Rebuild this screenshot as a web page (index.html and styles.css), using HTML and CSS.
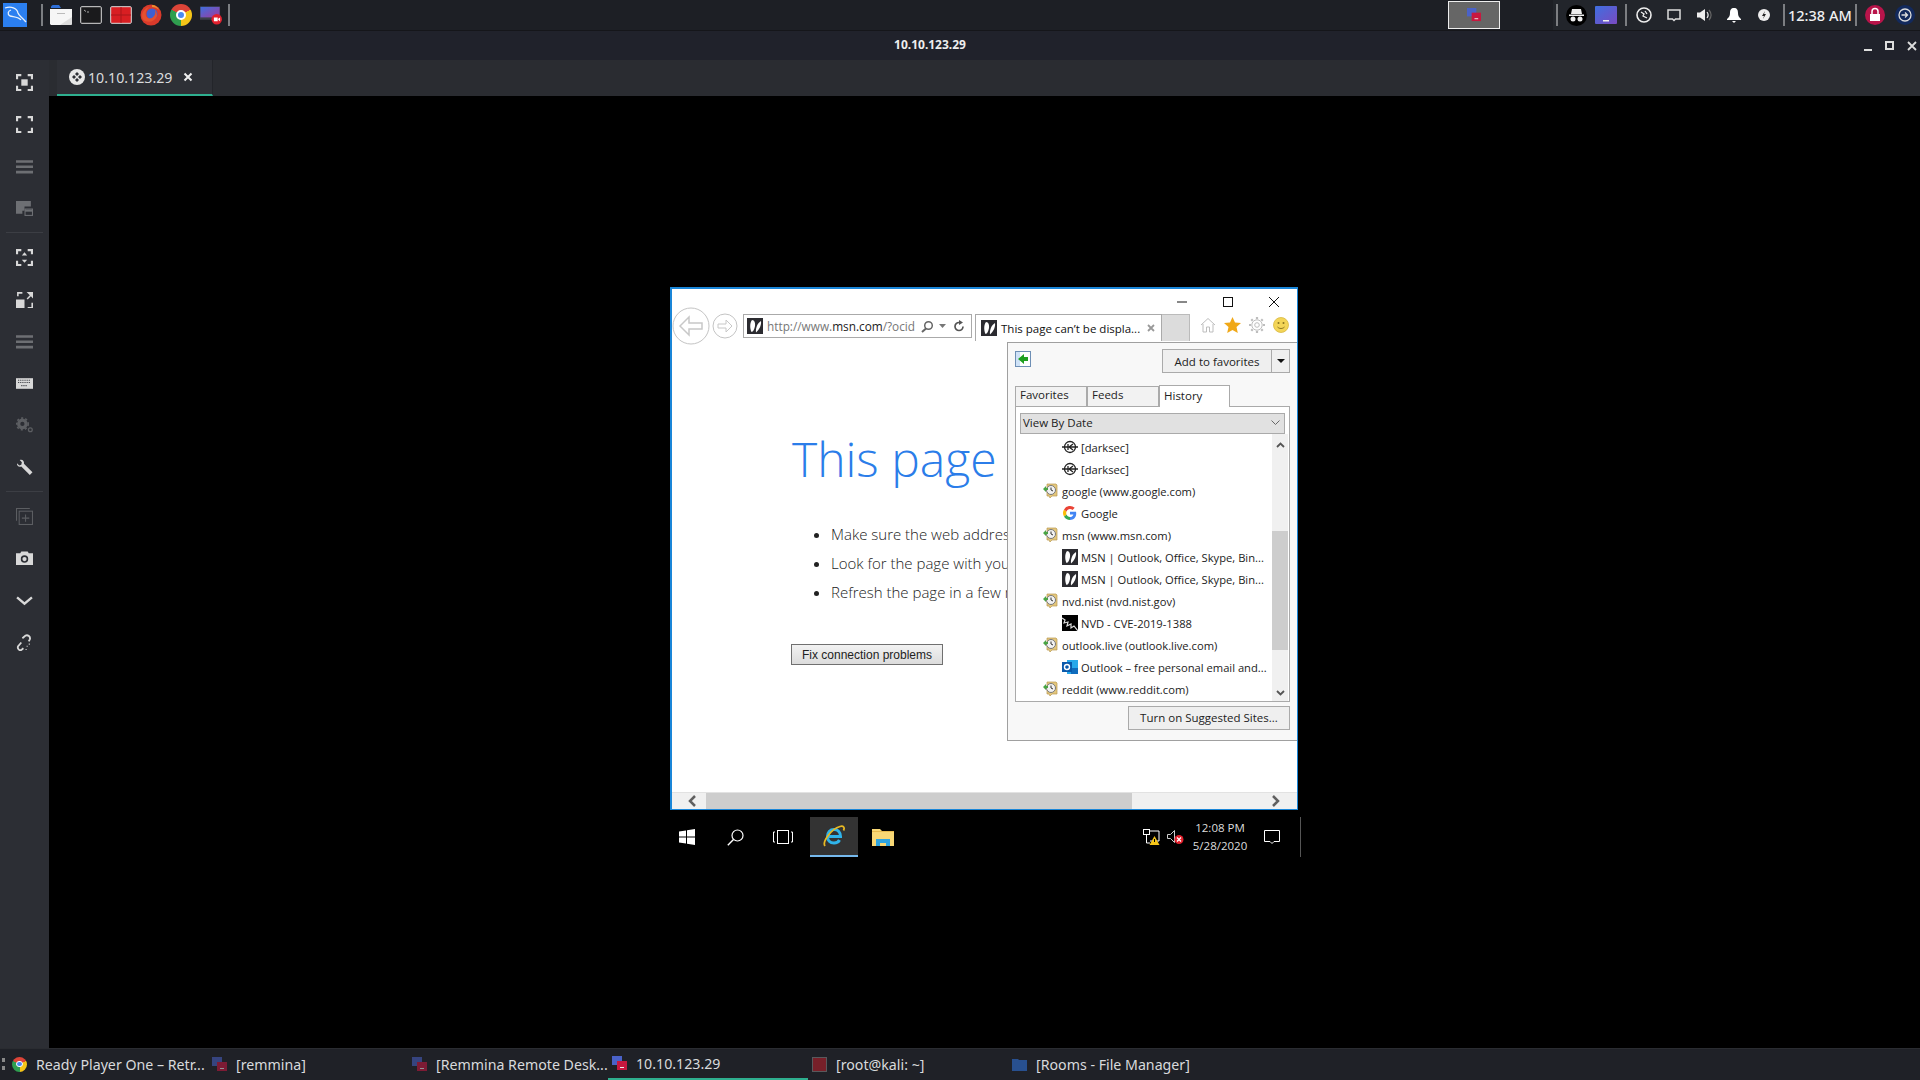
FILE: index.html
```html
<!DOCTYPE html>
<html lang="en">
<head>
    <meta charset="UTF-8">
    <title>10.10.123.29</title>
    <link rel="stylesheet" href="styles.css">
</head>
<body>
<svg class="defs" width="0" height="0">
    <symbol id="msn" viewBox="0 0 16 16"><rect width="16" height="16" fill="#2b2b30"/><path d="M5 2c2.500 0 3.500 3 3 6-.5 3-2 6-3.500 6C3 11 2.500 5 5 2zM14 3c.6 4-1.500 8.500-5 11.500C8.500 10 10.500 5 14 3z" fill="#fff"/></symbol>
    <symbol id="hist" viewBox="0 0 16 16"><path d="M4 1h9l1 1v11H9l-2 2-1-2H4z" fill="#e4c77c" stroke="#b99a50" stroke-width=".7"/><circle cx="8" cy="7" r="4.500" fill="#f2f2f2" stroke="#777"/><path d="M8 4.500V7l2 1" fill="none" stroke="#333"/><path d="M0 6l3-3v2h2v2H3v2z" fill="#4aa544"/></symbol>
    <symbol id="darksec" viewBox="0 0 16 16"><circle cx="8" cy="8" r="5.500" fill="#fff" stroke="#222" stroke-width="1.300"/><path d="M0 8h16M6 5v6M11 5L7 8l4 3" fill="none" stroke="#222" stroke-width="1.300"/></symbol>
    <symbol id="corners" viewBox="0 0 16 16"><path d="M1 5V1h4M11 1h4v4M15 11v4h-4M5 15H1v-4" fill="none" stroke="currentColor" stroke-width="2"/></symbol>
    <symbol id="bars" viewBox="0 0 16 16"><path d="M0 2h16v2.500H0zM0 7h16v2.500H0zM0 12h16v2.500H0z" fill="currentColor"/></symbol>
    <symbol id="rem" viewBox="0 0 15 15"><rect width="10" height="9" fill="#4a62c8"/><rect x="5" y="5" width="10" height="9" fill="#c8173f"/><rect x="8" y="11" width="4" height="1" fill="#eee"/></symbol>
</svg>

<div class="desktop">
    <div class="top-panel">
        <div class="launchers">
            <svg class="kali" viewBox="0 0 24 24"><rect width="24" height="24" fill="#2b7ff0"/><path d="M2 5c6-2 12 0 13 5 1 3 4 4 8 9M8 7c-3 1-4 4-1 6 4 1 9 1 11 4" fill="none" stroke="#e8f1fb" stroke-width="1.300"/></svg>
            <i class="sep"></i>
            <svg class="launch first" viewBox="0 0 22 22"><path d="M1 3c0-1 1-2 2-2h6l2 3H1z" fill="#2e6fd8"/><path d="M0 5h22v15l-1 1H1l-1-1z" fill="#f6f6f6"/><path d="M7 9h8v1H7z" fill="#bbb"/><path d="M22 13v7l-1 1H10z" fill="#ddd"/></svg>
            <svg class="launch" viewBox="0 0 22 22"><rect x=".7" y="2.700" width="20.600" height="16.600" rx="1" fill="#1a1a1c" stroke="#ddd" stroke-width="1"/><path d="M4 6l2 1.500M7 8h2" stroke="#aaa"/></svg>
            <svg class="launch" viewBox="0 0 22 22"><rect x=".7" y="2.700" width="20.600" height="16.600" rx="1" fill="#d81e22" stroke="#ddd" stroke-width="1"/><path d="M11 3v16M1 11h20" stroke="#a8161a"/></svg>
            <svg class="launch" viewBox="0 0 22 22"><circle cx="11" cy="11" r="10.500" fill="#d93a2b"/><circle cx="12" cy="10" r="5.500" fill="#3f5fd0"/><path d="M5 17c5 2 10 0 12-5 0-3-1-5-2-6 1 3 0 6-3 8-3 1-5 0-6-2-1-3 0-6 3-9-4 1-7 5-7 9 0 2 1 4 3 5z" fill="#e5502f"/><path d="M12 1c3 0 6 2 7 5-2-2-4-3-7-3z" fill="#e8912d"/></svg>
            <div class="launch chrome"><span></span></div>
            <svg class="launch" viewBox="0 0 23 22"><rect y="2" width="21" height="14" fill="#3c3f4a"/><rect x=".5" y="2.500" width="20" height="11" fill="url(#mon)"/><defs><linearGradient id="mon" x1="0" y1="0" x2="1" y2="1"><stop offset="0" stop-color="#3f6fe0"/><stop offset="1" stop-color="#a03a9c"/></linearGradient></defs><circle cx="17.500" cy="15.500" r="5.500" fill="#e0202e"/><path d="M14.500 13.500h4v4h-4zM19 15l2-1.500v4L19 16z" fill="#fff"/></svg>
            <i class="sep after"></i>
        </div>
        <div class="panel-right">
            <div class="thumb">
                <svg width="16" height="14" viewBox="0 0 15 15"><use href="#rem"/></svg>
            </div>
            <div class="tray">
                <i class="sep"></i>
                <svg class="ic-incog" viewBox="0 0 21 21"><circle cx="10.500" cy="10.500" r="10.500" fill="#000"/><path d="M6 4h9l1 5H5zM3 9.500h15V11H3z" fill="#eee"/><circle cx="7" cy="14" r="2.500" fill="#eee"/><circle cx="14" cy="14" r="2.500" fill="#eee"/></svg>
                <svg class="ic-box" viewBox="0 0 22 18"><defs><linearGradient id="box" x1="0" y1="0" x2="1" y2="1"><stop offset="0" stop-color="#3f6fe0"/><stop offset="1" stop-color="#7a4ac0"/></linearGradient></defs><rect width="22" height="18" rx="1" fill="url(#box)"/><path d="M8 14h6v1.500H8z" fill="#eee"/></svg>
                <i class="sep"></i>
                <div class="tray-icons">
                    <svg width="16" height="16" viewBox="0 0 16 16"><circle cx="8" cy="8" r="7" fill="none" stroke="#eee" stroke-width="1.600"/><path d="M5 5l3 2-1 2 4 2M9 4l2 3" fill="none" stroke="#eee" stroke-width="1.300"/></svg>
                    <svg width="14" height="14" viewBox="0 0 14 14"><path d="M1 2h12v9H8.500L7 12.500 5.500 11H1z" fill="none" stroke="#ddd" stroke-width="1.500"/></svg>
                    <svg width="16" height="16" viewBox="0 0 16 16"><path d="M1 5.500h3L9 2v12l-5-3.500H1z" fill="#eee"/><path d="M11 5c1.500 2 1.500 4 0 6" fill="none" stroke="#eee" stroke-width="1.200"/><path d="M13 3c2.500 3 2.500 7 0 10" fill="none" stroke="#666" stroke-width="1.200"/></svg>
                    <svg width="14" height="16" viewBox="0 0 14 16"><path d="M7 1c3 0 4 2 4 5 0 3 1 4 3 6v1H0v-1c2-2 3-3 3-6 0-3 1-5 4-5zM5 14h4l-2 2z" fill="#fff"/></svg>
                    <svg class="ic-dot" width="12" height="12" viewBox="0 0 12 12"><circle cx="6" cy="6" r="6" fill="#eee"/><path d="M7 2L4 7h2l-1 3 3-5H6z" fill="#222"/></svg>
                </div>
                <i class="sep clock-sep"></i>
                <span class="clock">12:38 AM</span>
                <i class="sep"></i>
                <svg class="ic-round" viewBox="0 0 20 20"><circle cx="10" cy="10" r="10" fill="#b8144a"/><rect x="5" y="9" width="10" height="7" fill="#fff"/><path d="M7 9V6.500a3 3 0 0 1 6 0V9" fill="none" stroke="#fff" stroke-width="1.500"/></svg>
                <svg class="ic-round last" viewBox="0 0 20 20"><circle cx="10" cy="10" r="10" fill="#12295c"/><circle cx="10" cy="10" r="6" fill="none" stroke="#ddd" stroke-width="1.300"/><path d="M6.500 10h6M10 7.500l2.500 2.500-2.500 2.500" fill="none" stroke="#ddd" stroke-width="1.300"/></svg>
            </div>
        </div>
    </div>

    <div class="title-bar">
        <span class="title">10.10.123.29</span>
        <div class="title-btns">
            <svg width="10" height="10" viewBox="0 0 10 10"><path d="M1 8h8v2H1z" fill="#ddd"/></svg>
            <svg width="10" height="10" viewBox="0 0 10 10"><rect x="1" y="1" width="7" height="7" fill="none" stroke="#ddd" stroke-width="2"/></svg>
            <svg width="10" height="10" viewBox="0 0 10 10"><path d="M1 1l8 8M9 1L1 9" stroke="#ddd" stroke-width="1.800"/></svg>
        </div>
    </div>

    <div class="main">
        <div class="side">
            <div class="side-btn"><svg viewBox="0 0 16 16"><use href="#corners"/><rect x="5" y="5" width="6" height="6" fill="currentColor"/></svg></div>
            <div class="side-btn"><svg viewBox="0 0 16 16"><use href="#corners"/></svg></div>
            <div class="side-btn dim"><svg viewBox="0 0 16 16"><use href="#bars"/></svg></div>
            <div class="side-btn dim"><svg viewBox="0 0 16 16"><path d="M0 1h14v5H8v4H6v3H0z" fill="currentColor"/><rect x="8.500" y="8.500" width="7" height="6" fill="none" stroke="currentColor"/><path d="M8.500 9h7v2h-7z" fill="currentColor"/></svg></div>
            <div class="side-rule"></div>
            <div class="side-btn"><svg viewBox="0 0 16 16"><use href="#corners"/><path d="M8 3l2.500 3h-5zM8 13l-2.500-3h5z" fill="currentColor"/></svg></div>
            <div class="side-btn"><svg viewBox="0 0 16 16"><path d="M0 8h8v8H0zM1 5V1h5v1.500H2.500V5zM11 15h3.500v-4H16v5h-5zM10 1h6v6l-2-2-3 3-1-1 3-3z" fill="currentColor"/></svg></div>
            <div class="side-btn dim"><svg viewBox="0 0 16 16"><use href="#bars"/></svg></div>
            <div class="side-btn"><svg viewBox="0 0 16 16"><path d="M0 3h16v10H0z" fill="currentColor"/><path d="M2 5h12M2 7h12M5 10h6" stroke="#2d2f35" stroke-dasharray="1 1"/></svg></div>
            <div class="side-btn dimmer"><svg viewBox="0 0 16 16"><circle cx="6" cy="6.500" r="3.500" fill="none" stroke="currentColor" stroke-width="3"/><circle cx="6" cy="6.500" r="5.500" fill="none" stroke="currentColor" stroke-width="1.500" stroke-dasharray="2 2"/><circle cx="13.500" cy="12" r="1.800" fill="none" stroke="currentColor" stroke-width="1.200"/></svg></div>
            <div class="side-btn"><svg viewBox="0 0 16 16"><path d="M1 4l2 2 2-.5L5.500 3 3.500 1C6 0 8 2 7.500 4.500L15.500 12.500 13 15 5 7C3 8 .5 6.500 1 4z" fill="currentColor"/></svg></div>
            <div class="side-rule"></div>
            <div class="side-btn dimmer"><svg viewBox="0 0 16 16"><path d="M.5 12V.5H13" fill="none" stroke="currentColor"/><rect x="3" y="3" width="12.500" height="12.500" fill="none" stroke="currentColor"/><path d="M9 6v7M5.500 9.500h7" stroke="currentColor"/></svg></div>
            <div class="side-btn"><svg viewBox="0 0 16 16"><path fill-rule="evenodd" d="M0 3h4l1-1.500h6L12 3h4v11H0zM8 5a3.500 3.500 0 1 0 0 7 3.500 3.500 0 0 0 0-7z" fill="currentColor"/><circle cx="8" cy="8.500" r="2" fill="currentColor"/></svg></div>
            <div class="side-btn"><svg viewBox="0 0 16 16"><path d="M1 5l7 6 7-6" fill="none" stroke="currentColor" stroke-width="2.200"/></svg></div>
            <div class="side-btn"><svg viewBox="0 0 16 16"><path d="M7 13.500l-2 1.500c-2 1-4-1.500-3-3.500L5 8M6 4l3-2.500c2-1 5 1 4 3.500l-1 2" fill="none" stroke="currentColor" stroke-width="1.700"/><path d="M10 11h1v1h-1zM12 9h1v1h-1zM9 14h1v1H9z" fill="currentColor"/></svg></div>
        </div>
        <div class="content">
            <div class="tab-strip">
                <div class="tab">
                    <svg width="16" height="16" viewBox="0 0 16 16"><circle cx="8" cy="8" r="8" fill="#e8e8e8"/><path d="M8 3l2 2-2 2-2-2zM8 9l2 2-2 2-2-2zM3 8l2-2 2 2-2 2zM9 8l2-2 2 2-2 2z" fill="#2e3036"/></svg>
                    <span>10.10.123.29</span>
                    <svg class="tab-x" width="10" height="10" viewBox="0 0 10 10"><path d="M1.500 1.500l7 7M8.500 1.500l-7 7" stroke="#eee" stroke-width="2"/></svg>
                </div>
            </div>
            <div class="viewer">
                <div class="remote">
                    <div class="ie">
                        <div class="ie-caption">
                            <svg width="12" height="12" viewBox="0 0 12 12"><path d="M1 6h10" stroke="#111"/></svg>
                            <svg width="12" height="12" viewBox="0 0 12 12"><rect x="1.500" y="1.500" width="9" height="9" fill="none" stroke="#111"/></svg>
                            <svg width="12" height="12" viewBox="0 0 12 12"><path d="M1 1l10 10M11 1L1 11" stroke="#111"/></svg>
                        </div>
                        <div class="ie-toolbar">
                            <svg class="nav-back" width="38" height="38" viewBox="0 0 38 38"><circle cx="19" cy="19" r="18" fill="#fff" stroke="#c4c4c4"/><path d="M8 19l9-9v6h13v6H17v6z" fill="none" stroke="#c8c8c8" stroke-width="1.500"/></svg>
                            <svg class="nav-fwd" width="26" height="26" viewBox="0 0 26 26"><circle cx="13" cy="13" r="12" fill="#fff" stroke="#c4c4c4"/><path d="M20 13l-6-6v4H6v4h8v4z" fill="none" stroke="#c8c8c8"/></svg>
                            <div class="addr">
                                <svg width="16" height="16"><use href="#msn"/></svg>
                                <span class="url">http://www.<b>msn.com</b>/?ocid</span>
                                <svg width="13" height="13" viewBox="0 0 13 13"><circle cx="7.500" cy="5.500" r="3.800" fill="none" stroke="#666" stroke-width="1.500"/><path d="M5 8.500L1 12" stroke="#666" stroke-width="2"/></svg>
                                <svg class="addr-caret" width="7" height="4" viewBox="0 0 7 4"><path d="M0 0h7L3.500 4z" fill="#777"/></svg>
                                <svg width="12" height="12" viewBox="0 0 12 12"><path d="M10 6.500A4 4 0 1 1 6 2.500" fill="none" stroke="#555" stroke-width="1.700"/><path d="M6 0l4 2.500L6 5z" fill="#555"/></svg>
                            </div>
                            <div class="ie-tab">
                                <svg width="16" height="16"><use href="#msn"/></svg>
                                <span>This page can&rsquo;t be displa...</span>
                                <svg width="8" height="8" viewBox="0 0 8 8"><path d="M1 1l6 6M7 1L1 7" stroke="#999" stroke-width="1.800"/></svg>
                            </div>
                            <div class="ie-newtab"></div>
                            <div class="ie-tools">
                                <svg width="16" height="16" viewBox="0 0 16 16"><path d="M1 8l7-6.500L15 8M3 7v8h3.500v-5h3v5H13V7" fill="none" stroke="#bdbdbd"/></svg>
                                <svg width="17" height="16" viewBox="0 0 17 16"><path d="M8.500 0l2.500 5.500 6 .6-4.500 4 1.300 5.900-5.300-3-5.300 3 1.300-5.900-4.500-4 6-.6z" fill="#f0a818"/></svg>
                                <svg width="16" height="16" viewBox="0 0 16 16"><path d="M8 0v2M8 14v2M0 8h2M14 8h2M2.300 2.300l1.400 1.400M12.300 12.300l1.400 1.400M2.300 13.700l1.400-1.400M12.300 3.700l1.400-1.400" stroke="#bdbdbd" stroke-width="2.200"/><circle cx="8" cy="8" r="5.200" fill="#fff" stroke="#bdbdbd"/><circle cx="8" cy="8" r="2.300" fill="none" stroke="#bdbdbd"/></svg>
                                <svg width="16" height="16" viewBox="0 0 16 16"><circle cx="8" cy="8" r="7.500" fill="#f3d558" stroke="#d8b840" stroke-width=".8"/><circle cx="5.500" cy="6" r="1" fill="#8a7420"/><circle cx="10.500" cy="6" r="1" fill="#8a7420"/><path d="M4.500 10c2 2 5 2 7 0" fill="none" stroke="#8a7420"/></svg>
                            </div>
                        </div>
                        <div class="page">
                            <h1>This page can&rsquo;t be displayed</h1>
                            <ul>
                                <li>Make sure the web address http://www.msn.com is correct.</li>
                                <li>Look for the page with your search engine.</li>
                                <li>Refresh the page in a few minutes.</li>
                            </ul>
                            <button class="fix-btn">Fix connection problems</button>
                        </div>
                        <div class="hscroll">
                            <div class="hs-btn"><svg width="10" height="12" viewBox="0 0 10 12"><path d="M8 1L3 6l5 5" fill="none" stroke="#606060" stroke-width="2.500"/></svg></div>
                            <div class="hs-thumb"></div>
                            <div class="hs-rest"><svg width="10" height="12" viewBox="0 0 10 12"><path d="M2 1l5 5-5 5" fill="none" stroke="#606060" stroke-width="2.500"/></svg></div>
                        </div>

                        <div class="fav-panel">
                            <div class="fav-top">
                                <svg width="16" height="16" viewBox="0 0 16 16"><rect x=".5" y=".5" width="15" height="15" fill="#cfe2f7" stroke="#6e8fb5"/><path d="M5 1h10v14H5z" fill="#fff"/><path d="M3 8l6-5v3h4v4H9v3z" fill="#1fa01f"/></svg>
                                <div class="fav-add">
                                    <span class="fav-add-label">Add to favorites</span>
                                    <span class="fav-add-drop"><svg width="8" height="4" viewBox="0 0 8 4"><path d="M0 0h8L4 4z" fill="#111"/></svg></span>
                                </div>
                            </div>
                            <div class="fav-tabs">
                                <span class="fav-tab">Favorites</span>
                                <span class="fav-tab">Feeds</span>
                                <span class="fav-tab active">History</span>
                            </div>
                            <div class="fav-box">
                                <div class="view-select">
                                    <span>View By Date</span>
                                    <svg width="9" height="5" viewBox="0 0 9 5"><path d="M.5.500l4 4 4-4" fill="none" stroke="#666"/></svg>
                                </div>
                                <div class="list-wrap">
                                    <div class="rows">
                                        <div class="row child"><svg width="16" height="16"><use href="#darksec"/></svg>[darksec]</div>
                                        <div class="row child"><svg width="16" height="16"><use href="#darksec"/></svg>[darksec]</div>
                                        <div class="row"><svg width="16" height="16"><use href="#hist"/></svg>google (www.google.com)</div>
                                        <div class="row child"><svg width="16" height="16" viewBox="0 0 16 16"><path d="M14 6.800H8v2.600h3.400c-.3 1.500-1.700 2.600-3.400 2.600V15c3.700 0 6.200-2.600 6.200-6.200 0-.7 0-1.300-.2-2z" fill="#4285f4"/><path d="M8 12c-1.600 0-3-1-3.500-2.500L2 11.500C3.100 13.600 5.400 15 8 15z" fill="#34a853"/><path d="M4.500 9.500a4 4 0 0 1 0-3L2 4.500a7 7 0 0 0 0 7z" fill="#fbbc05"/><path d="M8 4c.9 0 1.800.3 2.500 1l2.200-2.200A7 7 0 0 0 2 4.500l2.500 2C5 5 6.400 4 8 4z" fill="#ea4335"/></svg>Google</div>
                                        <div class="row"><svg width="16" height="16"><use href="#hist"/></svg>msn (www.msn.com)</div>
                                        <div class="row child"><svg width="16" height="16"><use href="#msn"/></svg>MSN | Outlook, Office, Skype, Bin...</div>
                                        <div class="row child"><svg width="16" height="16"><use href="#msn"/></svg>MSN | Outlook, Office, Skype, Bin...</div>
                                        <div class="row"><svg width="16" height="16"><use href="#hist"/></svg>nvd.nist (nvd.nist.gov)</div>
                                        <div class="row child"><svg width="16" height="16" viewBox="0 0 16 16"><rect width="16" height="16" fill="#000"/><path d="M0 3l3 2-1 3 4-1-1 4 4-2 0 4 3-2 4 5" fill="none" stroke="#ddd" stroke-width="1.200"/></svg>NVD - CVE-2019-1388</div>
                                        <div class="row"><svg width="16" height="16"><use href="#hist"/></svg>outlook.live (outlook.live.com)</div>
                                        <div class="row child"><svg width="16" height="16" viewBox="0 0 16 16"><rect x="5" y="1" width="11" height="14" fill="#28a8ea"/><path d="M9 9h7v6H9z" fill="#0f6cbd"/><rect y="3" width="10" height="10" fill="#0a5aab"/><circle cx="5" cy="8" r="2.500" fill="none" stroke="#fff" stroke-width="1.400"/></svg>Outlook &ndash; free personal email and...</div>
                                        <div class="row"><svg width="16" height="16"><use href="#hist"/></svg>reddit (www.reddit.com)</div>
                                    </div>
                                    <div class="vscroll">
                                        <div class="vs-btn up"><svg width="9" height="6" viewBox="0 0 9 6"><path d="M1 5l3.500-3.500L8 5" fill="none" stroke="#555" stroke-width="1.800"/></svg></div>
                                        <div class="vs-gap"></div>
                                        <div class="vs-thumb"></div>
                                        <div class="vs-fill"></div>
                                        <div class="vs-btn"><svg width="9" height="6" viewBox="0 0 9 6"><path d="M1 1l3.500 3.500L8 1" fill="none" stroke="#555" stroke-width="1.800"/></svg></div>
                                    </div>
                                </div>
                            </div>
                            <div class="fav-foot"><span class="suggest-btn">Turn on Suggested Sites...</span></div>
                        </div>
                    </div>

                    <div class="win-bar">
                        <div class="win-cell"><svg width="16" height="16" viewBox="0 0 16 16"><path d="M0 2.500l7-1V7.500H0zM8 1.300L16 0v7.500H8zM0 8.500h7v6l-7-1zM8 8.500h8V16l-8-1.200z" fill="#fff"/></svg></div>
                        <div class="win-cell"><svg width="17" height="17" viewBox="0 0 17 17"><circle cx="10.500" cy="6.500" r="5.500" fill="none" stroke="#fff" stroke-width="1.200"/><path d="M6.500 10.500L.8 16.300" stroke="#fff" stroke-width="1.400"/></svg></div>
                        <div class="win-cell"><svg width="20" height="14" viewBox="0 0 20 14"><path d="M2 2H.5v10H2M18 2h1.500v10H18" fill="none" stroke="#fff"/><rect x="4.500" y=".5" width="11" height="13" fill="none" stroke="#fff"/></svg></div>
                        <div class="win-cell active"><svg width="24" height="24" viewBox="0 0 24 24"><path d="M6 12.500h12.500c0-4-2.500-7-6.500-7s-6.500 3-6.500 7 2.500 6.500 6.500 6.500c2.500 0 4.500-1 5.500-3" fill="none" stroke="#2fb4ea" stroke-width="3"/><path d="M3 22C0 18 9 5 18 2.500c3.500-1 5 1 3.500 4" fill="none" stroke="#e8b923" stroke-width="1.800"/></svg></div>
                        <div class="win-cell"><svg width="22" height="18" viewBox="0 0 22 18"><path d="M0 1h8l2 2h12v15H0z" fill="#f8d775"/><path d="M0 3h22v1H0z" fill="#e6b94e"/><path d="M4 18v-7h14v7h-4v-3H8v3z" fill="#2fa4e0"/></svg></div>
                        <div class="win-tray">
                            <svg width="17" height="16" viewBox="0 0 17 16"><path d="M3.500 2H16v10H7" fill="none" stroke="#fff"/><rect x=".5" y=".5" width="6" height="5" fill="#000" stroke="#fff"/><path d="M3.500 5.500V14H7" fill="none" stroke="#fff"/><path d="M11.500 7l5 9h-10z" fill="#f5c518"/><path d="M11 10h1v3h-1z" fill="#000"/></svg>
                            <svg width="17" height="16" viewBox="0 0 17 16"><path d="M.5 5.500h3l4-4v12l-4-4h-3z" fill="none" stroke="#ccc"/><circle cx="12" cy="10.500" r="4.500" fill="#e2202c"/><path d="M10 8.500l4 4M14 8.500l-4 4" stroke="#fff" stroke-width="1.200"/></svg>
                            <div class="win-clock"><span>12:08 PM</span><span>5/28/2020</span></div>
                            <svg class="win-note" width="16" height="16" viewBox="0 0 16 16"><path d="M.5 1.500h15v11H10L8 14.500 6 12.500H.5z" fill="none" stroke="#fff"/></svg>
                            <i class="win-line"></i>
                        </div>
                    </div>
                </div>
            </div>
        </div>
    </div>

    <div class="bottom-bar">
        <div class="task-grip"></div>
        <div class="task"><div class="chrome small"><span></span></div><span class="task-label">Ready Player One &ndash; Retr...</span></div>
        <div class="task"><svg class="faded" width="15" height="15"><use href="#rem"/></svg><span class="task-label">[remmina]</span></div>
        <div class="task"><svg class="faded" width="15" height="15"><use href="#rem"/></svg><span class="task-label">[Remmina Remote Desk...</span></div>
        <div class="task current"><svg width="15" height="15"><use href="#rem"/></svg><span class="task-label">10.10.123.29</span></div>
        <div class="task"><svg class="faded" width="15" height="15" viewBox="0 0 15 15"><rect x=".5" y=".5" width="14" height="14" fill="#c0202c" stroke="#888"/></svg><span class="task-label">[root@kali: ~]</span></div>
        <div class="task"><svg width="15" height="13" viewBox="0 0 15 13"><path d="M0 1h6l1 1h8v11H0z" fill="#28508f"/></svg><span class="task-label">[Rooms - File Manager]</span></div>
    </div>
</div>
</body>
</html>
```

FILE: styles.css
```css
* {
    box-sizing: border-box;
}

html, body {
    margin: 0;
    height: 100%;
    overflow: hidden;
    background: #000;
}

body {
    font-family: 'Noto Sans', sans-serif;
}

.defs {
    position: absolute;
}

svg {
    display: block;
    flex-shrink: 0;
}

.desktop {
    width: 1920px;
    height: 1080px;
    display: flex;
    flex-direction: column;
}

/* top panel */
.top-panel {
    height: 31px;
    background: #1d1f25;
    border-bottom: 1px solid #15161a;
    display: flex;
    align-items: center;
    justify-content: space-between;
}

.launchers {
    display: flex;
    align-items: center;
    padding-left: 3px;
    gap: 8px;
}

.kali {
    width: 24px;
    height: 24px;
    margin-right: 6px;
}

.sep {
    display: block;
    width: 2px;
    height: 22px;
    background: #7c7e82;
}

.launch {
    width: 22px;
    height: 22px;
}

.launch.first {
    margin-left: -1px;
}

.sep.after {
    margin-left: -2px;
}

.chrome {
    border-radius: 50%;
    background: conic-gradient(from -60deg, #dc4438 0 120deg, #f5c518 120deg 240deg, #2f9e4f 240deg 360deg);
    display: flex;
    align-items: center;
    justify-content: center;
}

.chrome span {
    width: 45%;
    height: 45%;
    border-radius: 50%;
    background: #4a8af0;
    border: 2px solid #fff;
}

.chrome.small {
    width: 15px;
    height: 15px;
}

.chrome.small span {
    border-width: 1px;
}

.panel-right {
    display: flex;
    align-items: center;
    height: 30px;
}

.thumb {
    width: 52px;
    height: 28px;
    background: #666;
    border: 1px solid #eee;
    display: flex;
    align-items: center;
    justify-content: center;
}

.tray {
    margin-left: 53px;
    height: 30px;
    padding: 0 5px 0 3px;
    background: #22252b;
    display: flex;
    align-items: center;
    gap: 8px;
}

.ic-incog {
    width: 21px;
    height: 21px;
}

.ic-box {
    width: 22px;
    height: 18px;
}

.ic-round {
    width: 20px;
    height: 20px;
}

.ic-round.last {
    margin-left: 2px;
}

.tray-icons {
    display: flex;
    align-items: center;
    gap: 15px;
    margin-left: 1px;
}

.ic-dot {
    margin-left: 2px;
}

.clock-sep {
    margin-left: 5px;
}

.clock {
    font-size: 14.5px;
    font-weight: 500;
    color: #f0f0f0;
    width: 62px;
    margin: 0 -3px 0 -5px;
    white-space: nowrap;
}

/* remmina window */
.title-bar {
    height: 29px;
    background: #20222b;
    display: flex;
    align-items: center;
    justify-content: center;
    padding: 0 60px 2px 0;
    position: relative;
}

.title {
    color: #eee;
    font-size: 12px;
    font-weight: 700;
}

.title-btns {
    position: absolute;
    right: 0;
    top: 10px;
    display: flex;
    gap: 12px;
    width: 57px;
}

.main {
    flex: 1;
    display: flex;
    min-height: 0;
}

.side {
    width: 49px;
    background: #2c2e34;
    padding-top: 1px;
    display: flex;
    flex-direction: column;
}

.side-btn {
    height: 42px;
    display: flex;
    align-items: center;
    justify-content: center;
    color: #d8d8d8;
    padding-right: 1px;
}

.side-btn svg {
    width: 17px;
    height: 17px;
}

.side-btn.dim {
    color: #6d6f73;
}

.side-btn.dimmer {
    color: #5c5e62;
}

.side-rule {
    height: 1px;
    margin: 3px 6px;
    background: #3c3e44;
}

.content {
    flex: 1;
    display: flex;
    flex-direction: column;
    min-width: 0;
}

.tab-strip {
    height: 36px;
    background: #2a2c31;
    padding-left: 8px;
    display: flex;
}

.tab {
    width: 156px;
    background: #2e3036;
    border-bottom: 2px solid #2eaf8f;
    border-right: 1px solid #23252a;
    display: flex;
    align-items: center;
    padding-left: 12px;
    gap: 3px;
    color: #d8dadc;
    font-size: 14.2px;
}

.tab-x {
    margin-left: 8px;
}

.viewer {
    flex: 1;
    background: #000;
    position: relative;
    overflow: hidden;
}

.remote {
    position: absolute;
    left: 614px;
    top: 191px;
    width: 639px;
}

/* internet explorer window */
.ie {
    margin-left: 7px;
    width: 628px;
    height: 523px;
    background: #fff;
    border: 1px solid #1a86d8;
    border-top-width: 2px;
    border-left-width: 2px;
    display: flex;
    flex-direction: column;
    position: relative;
    font-family: 'Open Sans', sans-serif;
}

.ie-caption {
    height: 25px;
    display: flex;
    justify-content: flex-end;
    align-items: center;
    gap: 34px;
    padding-right: 17px;
    flex-shrink: 0;
}

.ie-toolbar {
    height: 27px;
    display: flex;
    align-items: flex-start;
    flex-shrink: 0;
    position: relative;
    z-index: 1;
}

.nav-back {
    margin-top: -7px;
}

.nav-fwd {
    margin: -1px 0 0 2px;
}

.addr {
    width: 229px;
    height: 24px;
    margin-left: 5px;
    border: 1px solid #aaa;
    display: flex;
    align-items: center;
    padding-left: 3px;
    background: #fff;
}

.url {
    font-size: 11.8px;
    color: #777;
    margin-left: 4px;
    width: 154px;
    white-space: nowrap;
}

.url b {
    font-weight: 400;
    color: #222;
}

.addr-caret {
    margin: 0 7px 0 5px;
}

.ie-tab {
    width: 187px;
    height: 27px;
    margin-left: 3px;
    border: 1px solid #aaa;
    border-bottom: 0;
    display: flex;
    align-items: center;
    padding-left: 5px;
    font-size: 11.5px;
    color: #111;
    gap: 4px;
}

.ie-tab span {
    width: 136px;
    white-space: nowrap;
}

.ie-tab svg:last-child {
    margin-left: 6px;
}

.ie-newtab {
    width: 28px;
    height: 27px;
    background: #dcdcdc;
    border: 1px solid #bbb;
    border-left: 0;
    border-bottom: 0;
}

.ie-tools {
    display: flex;
    align-items: center;
    gap: 8px;
    margin: 3px 0 0 10px;
}

.page {
    flex: 1;
    margin-right: 290px;
    padding: 84px 0 0 120px;
    overflow: hidden;
    white-space: nowrap;
    min-height: 0;
}

.page h1 {
    margin: 0;
    font-size: 48px;
    line-height: 68px;
    font-weight: 300;
    color: #2b7de9;
}

.page ul {
    margin: 27px 0 0;
    padding: 0 0 0 39px;
    font-size: 15px;
    line-height: 29px;
    font-weight: 300;
    color: #222;
}

.fix-btn {
    display: block;
    margin: 37px 0 0 -1px;
    width: 152px;
    height: 21px;
    padding: 0;
    font-family: 'Liberation Sans', sans-serif;
    font-size: 12px;
    color: #222;
    border: 1px solid #707070;
    background: linear-gradient(#f2f2f2, #dcdcdc);
}

.hscroll {
    height: 17px;
    flex-shrink: 0;
    display: flex;
    background: #f0f0f0;
    border-top: 1px solid #e2e2e2;
}

.hs-btn {
    width: 34px;
    display: flex;
    align-items: center;
    justify-content: center;
    padding-left: 5px;
}

.hs-thumb {
    width: 426px;
    background: #cdcdcd;
}

.hs-rest {
    flex: 1;
    display: flex;
    align-items: center;
    justify-content: flex-end;
    padding-right: 16px;
}

/* favorites panel lies over the page */
.fav-panel {
    position: absolute;
    left: 335px;
    top: 53px;
    width: 290px;
    height: 399px;
    background: #f8f8f8;
    border: 1px solid #a0a0a0;
    border-right: 0;
    padding: 6px 7px 0 7px;
    font-size: 11.5px;
    color: #222;
    z-index: 2;
}

.fav-top {
    height: 24px;
    display: flex;
    justify-content: space-between;
    align-items: flex-start;
    padding-top: 2px;
}

.fav-add {
    display: flex;
    height: 24px;
    margin-top: -2px;
    border: 1px solid #aaa;
    background: #efefef;
}

.fav-add-label {
    width: 108px;
    text-align: center;
    line-height: 23px;
}

.fav-add-drop {
    width: 18px;
    border-left: 1px solid #aaa;
    display: flex;
    align-items: center;
    justify-content: center;
}

.fav-tabs {
    display: flex;
    height: 21px;
    margin-top: 12px;
    align-items: flex-end;
}

.fav-tab {
    width: 72px;
    height: 20px;
    border: 1px solid #aaa;
    border-bottom: 0;
    padding-left: 4px;
    line-height: 16px;
    background: #f2f2f2;
}

.fav-tab.active {
    height: 22px;
    width: 71px;
    background: #fff;
    position: relative;
    top: 1px;
    line-height: 19px;
    z-index: 1;
}

.fav-box {
    height: 296px;
    background: #fff;
    border: 1px solid #aaa;
    padding-top: 6px;
}

.view-select {
    height: 21px;
    margin: 0 4px;
    background: #e1e1e1;
    border: 1px solid #aaa;
    display: flex;
    align-items: center;
    justify-content: space-between;
    padding: 0 4px 2px 2px;
}

.list-wrap {
    display: flex;
}

.rows {
    flex: 1;
    padding-top: 2px;
    min-width: 0;
    font-size: 11.2px;
}

.row {
    height: 22px;
    display: flex;
    align-items: center;
    gap: 3px;
    padding-left: 27px;
    white-space: nowrap;
}

.row.child {
    padding-left: 46px;
}

.vscroll {
    width: 16px;
    height: 267px;
    margin-right: 1px;
    background: #f0f0f0;
    display: flex;
    flex-direction: column;
}

.vs-btn {
    height: 17px;
    display: flex;
    align-items: center;
    justify-content: center;
}

.vs-btn.up {
    padding-top: 5px;
}

.vs-gap {
    height: 80px;
}

.vs-thumb {
    height: 119px;
    background: #cdcdcd;
}

.vs-fill {
    flex: 1;
}

.fav-foot {
    display: flex;
    justify-content: flex-end;
    margin-top: 4px;
}

.suggest-btn {
    width: 162px;
    height: 24px;
    border: 1px solid #aaa;
    background: #efefef;
    text-align: center;
    line-height: 22px;
}

/* windows taskbar inside the remote screen */
.win-bar {
    height: 54px;
    display: flex;
    align-items: center;
}

.win-cell {
    width: 48px;
    height: 40px;
    display: flex;
    align-items: center;
    justify-content: center;
}

.win-cell.active {
    background: #333;
    border-bottom: 2px solid #76b9ed;
    margin-left: 3px;
}

.win-cell.active + .win-cell {
    margin-left: 1px;
}

.win-tray {
    margin-left: auto;
    display: flex;
    align-items: center;
    padding-right: 1px;
    color: #ddd;
}

.win-tray svg + svg {
    margin-left: 7px;
}

.win-clock {
    width: 60px;
    margin-left: 6px;
    display: flex;
    flex-direction: column;
    align-items: center;
    font-size: 11.5px;
    line-height: 18px;
    font-family: 'Open Sans', sans-serif;
}

.win-note {
    margin-left: 14px;
}

.win-line {
    display: block;
    width: 1px;
    height: 40px;
    background: #555;
    margin-left: 20px;
}

/* bottom task bar */
.bottom-bar {
    height: 32px;
    background: #1f2127;
    border-top: 1px solid #2a2c31;
    display: flex;
}

.task-grip {
    width: 3px;
    height: 12px;
    margin: 9px 0 0 2px;
    border-left: 3px dotted #888;
}

.task {
    width: 200px;
    display: flex;
    align-items: center;
    gap: 9px;
    padding: 0 0 1px 4px;
    color: #d8dadc;
    font-size: 14.2px;
    white-space: nowrap;
}

.task-grip + .task {
    margin-left: 3px;
}

.task.current {
    border-bottom: 2px solid #2eaf8f;
    padding-bottom: 0;
}

.task .faded {
    opacity: 0.55;
}
```
